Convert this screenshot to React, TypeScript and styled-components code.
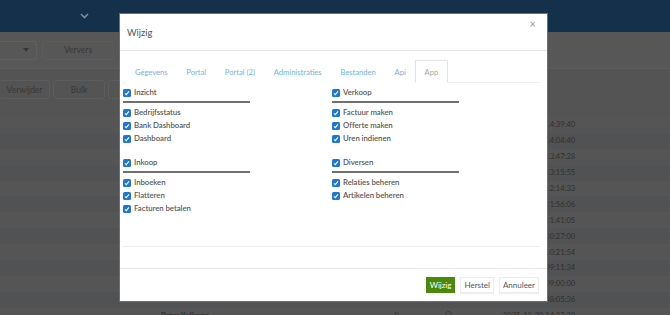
import React from "react";
import styled, { createGlobalStyle } from "styled-components";

const Global = createGlobalStyle`
  html, body { margin: 0; padding: 0; }
  body {
    width: 670px; height: 315px; overflow: hidden;
    background: #545454;
    font-family: Lato, "Noto Sans", sans-serif;
  }
  * { box-sizing: border-box; }
`;

const Page = styled.div`
  position: relative;
  width: 670px;
  height: 315px;
  overflow: hidden;
  background: #545454;
`;

const TopBar = styled.div`
  height: 32px;
  background: #15304a;
  display: flex;
  align-items: center;
  padding-left: 80px;
`;

const Toolbar = styled.div`
  height: 37px;
  display: flex;
  align-items: center;
  gap: 5px;
  border-bottom: 1px solid #5c5c5c;
  background: #575757;
`;

const SelectBox = styled.div`
  width: 38px;
  height: 19px;
  margin-left: -1px;
  border: 1px solid #5f5f5f;
  border-radius: 2px;
  display: flex;
  align-items: center;
  justify-content: flex-end;
  padding-right: 7px;
`;

const GhostButton = styled.div<{ $w: number }>`
  width: ${(p) => p.$w}px;
  height: 19px;
  border: 1px solid #5c5c5c;
  border-radius: 3px;
  display: flex;
  align-items: center;
  justify-content: center;
  font-size: 8.5px;
  color: #383838;
`;

const ActionRow = styled.div`
  display: flex;
  gap: 3px;
  padding-top: 11px;
  height: 48px;
  margin-left: -1px;
`;

const Table = styled.div`
  display: flex;
  flex-direction: column;
`;

const Row = styled.div<{ $alt: boolean }>`
  height: 15.9px;
  display: grid;
  grid-template-columns: 161px 221px 29px 74px 1fr;
  align-items: center;
  background: ${(p) => (p.$alt ? "#505253" : "#555555")};
  font-size: 7.5px;
  color: #303030;
`;

const Cell = styled.div<{ $align?: string; $pad?: number; $bold?: boolean }>`
  text-align: ${(p) => p.$align || "left"};
  padding-left: ${(p) => p.$pad || 0}px;
  white-space: nowrap;
  font-weight: ${(p) => (p.$bold ? 700 : 400)};
`;

const Dot = styled.span`
  display: inline-block;
  width: 7px;
  height: 7px;
  border: 1px solid #3a3a3a;
  border-radius: 50%;
`;

const Modal = styled.div`
  position: absolute;
  left: 119px;
  top: 13px;
  width: 429px;
  height: 289px;
  background: #fff;
  border: 1px solid #707070;
  display: flex;
  flex-direction: column;
  color: #555;
`;

const ModalHeader = styled.div`
  height: 37px;
  border-bottom: 1px solid #e8e8e8;
  display: flex;
  align-items: center;
  justify-content: space-between;
  padding: 0 11px 0 7px;
`;

const Title = styled.div`
  font-size: 9.3px;
  color: #555;
  margin-top: 1px;
`;

const Close = styled.div`
  font-size: 11px;
  color: #9a9a9a;
  align-self: flex-start;
  margin-top: 3px;
`;

const ModalBody = styled.div`
  flex: 1;
  padding: 9px 7px 0 3px;
  display: flex;
  flex-direction: column;
`;

const Tabs = styled.div`
  display: flex;
  height: 23px;
  border-bottom: 1px solid #eeeeee;
  padding-left: 2.5px;
`;

const Tab = styled.div<{ $active?: boolean }>`
  padding: 0 8.4px;
  display: flex;
  align-items: center;
  font-size: 7.6px;
  color: ${(p) => (p.$active ? "#a6a6a6" : "#72b2e2")};
  border: 1px solid ${(p) => (p.$active ? "#e2e2e2" : "transparent")};
  border-bottom-color: ${(p) => (p.$active ? "#fff" : "transparent")};
  margin-bottom: -1px;
  background: #fff;
`;

const Columns = styled.div`
  display: grid;
  grid-template-columns: 209px 209px;
  padding-top: 3px;
  height: 164px;
  border-bottom: 1px solid #eeeeee;
`;

const Column = styled.div`
  display: flex;
  flex-direction: column;
  gap: 11px;
`;

const Section = styled.div`
  display: flex;
  flex-direction: column;
`;

const SectionHead = styled.div`
  width: 127px;
  padding-bottom: 2px;
  border-bottom: 2px solid #707070;
  margin-bottom: 3px;
`;

const CheckLine = styled.label`
  display: flex;
  align-items: center;
  gap: 3px;
  height: 13px;
  line-height: 13px;
  font-size: 7.8px;
  letter-spacing: -0.05px;
  font-weight: 600;
  color: #585858;
  white-space: nowrap;
`;

const Box = styled.span`
  width: 8px;
  height: 8px;
  border-radius: 1.5px;
  background: #1d77d6;
  display: inline-flex;
  align-items: center;
  justify-content: center;
  flex: none;
`;

const Footer = styled.div`
  margin-top: auto;
  height: 33px;
  border-top: 1px solid #e8e8e8;
  display: flex;
  align-items: center;
  justify-content: flex-end;
  gap: 5px;
  padding-right: 8px;
`;

const Btn = styled.div<{ $primary?: boolean }>`
  height: 16px;
  padding: 0 3px;
  display: flex;
  align-items: center;
  font-size: 8px;
  background: ${(p) => (p.$primary ? "#4a8a0b" : "#fff")};
  color: ${(p) => (p.$primary ? "#fff" : "#555")};
  border: 1px solid ${(p) => (p.$primary ? "#4a8a0b" : "#ececec")};
  box-shadow: ${(p) => (p.$primary ? "none" : "0 1px 1px rgba(0,0,0,0.06)")};
`;

const Check = () => (
  <Box>
    <svg width="6" height="6" viewBox="0 0 6 6">
      <path d="M1 3.4 L2.3 4.6 L5 1.4" fill="none" stroke="#fff" strokeWidth="1.1" />
    </svg>
  </Box>
);

const Item = ({ label }: { label: string }) => (
  <CheckLine>
    <Check />
    {label}
  </CheckLine>
);

const Group = ({ title, items }: { title: string; items: string[] }) => (
  <Section>
    <SectionHead>
      <Item label={title} />
    </SectionHead>
    {items.map((i) => (
      <Item key={i} label={i} />
    ))}
  </Section>
);

const times = [
  "14:39:40", "14:04:40", "13:47:28", "13:15:55", "12:14:33", "11:56:06",
  "11:41:05", "10:27:00", "10:21:54", "09:11:34", "09:00:00", "08:05:36", "14:27:29",
];

export default function App() {
  return (
    <Page>
      <Global />
      <TopBar>
        <svg width="9" height="6" viewBox="0 0 9 6">
          <path d="M1 1 L4.5 4.5 L8 1" fill="none" stroke="#7d8c99" strokeWidth="1.6" />
        </svg>
      </TopBar>
      <Toolbar>
        <SelectBox>
          <svg width="6" height="4" viewBox="0 0 6 4">
            <path d="M0 0 L6 0 L3 3.5 Z" fill="#333" />
          </svg>
        </SelectBox>
        <GhostButton $w={72}>Ververs</GhostButton>
      </Toolbar>
      <ActionRow>
        <GhostButton $w={51}>Verwijder</GhostButton>
        <GhostButton $w={52}>Bulk</GhostButton>
        <GhostButton $w={60}> </GhostButton>
      </ActionRow>
      <Table>
        {times.map((t, i) => (
          <Row key={t} $alt={i % 2 === 1}>
            <Cell />
            <Cell $bold>Peter Kalkema</Cell>
            <Cell $align="center">0</Cell>
            <Cell $align="center"><Dot /></Cell>
            <Cell $pad={18}>2025-10-29 {t}</Cell>
          </Row>
        ))}
      </Table>
      <Modal>
        <ModalHeader>
          <Title>Wijzig</Title>
          <Close>×</Close>
        </ModalHeader>
        <ModalBody>
          <Tabs>
            <Tab>Gegevens</Tab>
            <Tab>Portal</Tab>
            <Tab>Portal (2)</Tab>
            <Tab>Administraties</Tab>
            <Tab>Bestanden</Tab>
            <Tab>Api</Tab>
            <Tab $active>App</Tab>
          </Tabs>
          <Columns>
            <Column>
              <Group title="Inzicht" items={["Bedrijfsstatus", "Bank Dashboard", "Dashboard"]} />
              <Group title="Inkoop" items={["Inboeken", "Flatteren", "Facturen betalen"]} />
            </Column>
            <Column>
              <Group title="Verkoop" items={["Factuur maken", "Offerte maken", "Uren indienen"]} />
              <Group title="Diversen" items={["Relaties beheren", "Artikelen beheren"]} />
            </Column>
          </Columns>
        </ModalBody>
        <Footer>
          <Btn $primary>Wijzig</Btn>
          <Btn>Herstel</Btn>
          <Btn>Annuleer</Btn>
        </Footer>
      </Modal>
    </Page>
  );
}
